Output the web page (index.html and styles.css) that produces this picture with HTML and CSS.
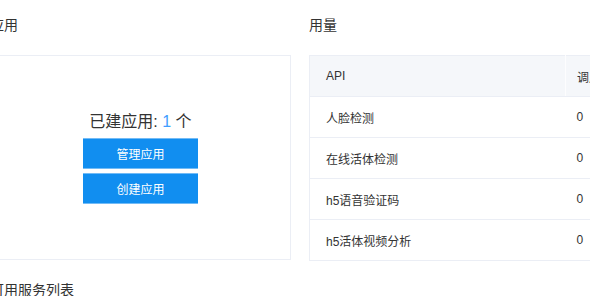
FILE: index.html
```html
<!DOCTYPE html>
<html>
<head>
  <title>控制台</title>
  <link rel="stylesheet" href="styles.css">
</head>
<body>
  <div class="overview">
    <div class="panel">
      <h3 class="panel-title">应用</h3>
      <div class="app-box">
        <p class="app-count">已建应用: <span class="num">1</span> 个</p>
        <button class="btn">管理应用</button>
        <button class="btn">创建应用</button>
      </div>
    </div>

    <div class="panel">
      <h3 class="panel-title">用量</h3>
      <table class="usage-table">
        <thead>
          <tr>
            <th class="col-api">API</th>
            <th class="col-calls">调用次数</th>
          </tr>
        </thead>
        <tbody>
          <tr><td>人脸检测</td><td>0</td></tr>
          <tr><td>在线活体检测</td><td>0</td></tr>
          <tr><td>h5语音验证码</td><td>0</td></tr>
          <tr><td>h5活体视频分析</td><td>0</td></tr>
        </tbody>
      </table>
    </div>
  </div>

  <h3 class="panel-title services-title">可用服务列表</h3>
</body>
</html>
```

FILE: styles.css
```css
body {
  font-family: "Liberation Sans", "Noto Sans CJK SC", sans-serif;
  margin: 0;
  background-color: #fff;
  color: #333;
  overflow: hidden;
}

.overview {
  display: grid;
  grid-template-columns: 301px 320px;
  gap: 18px;
  margin-left: -10px;
}

.panel-title {
  font-size: 14px;
  font-weight: normal;
  line-height: 20px;
  margin: 0;
  padding-top: 15px;
  margin-bottom: 20px;
  color: #333;
}

.app-box {
  height: 205px;
  border: 1px solid #ebeef5;
  box-sizing: border-box;
  display: flex;
  flex-direction: column;
  align-items: center;
  justify-content: center;
}

.app-count {
  font-size: 16px;
  line-height: 20px;
  margin: 0 0 6px 0;
  color: #333;
}

.app-count .num {
  color: #409eff;
}

.btn {
  width: 115px;
  height: 31px;
  margin-bottom: 4px;
  background-color: #118ef0;
  color: #fff;
  border: none;
  border-top: 1px solid #72bbf6;
  border-bottom: 1px solid #72bbf6;
  font-family: inherit;
  font-size: 12px;
  cursor: pointer;
}

.btn:last-child {
  margin-bottom: 0;
}

.usage-table {
  width: 320px;
  table-layout: fixed;
  border-collapse: collapse;
  font-size: 12px;
  color: #333;
  border: 1px solid #ebeef5;
}

.usage-table th,
.usage-table td {
  height: 40px;
  padding: 0 0 0 16px;
  text-align: left;
  font-weight: normal;
  border-bottom: 1px solid #ebeef5;
}

.usage-table thead tr {
  background-color: #f5f7fa;
}

.usage-table .col-api {
  width: 256px;
  box-sizing: border-box;
}

.usage-table .col-calls {
  border-left: 1px solid #fdfdfe;
  padding-left: 11px;
  white-space: nowrap;
}

.usage-table td:last-child {
  padding-left: 11px;
}

.services-title {
  margin-left: -10px;
  padding-top: 19px;
}
```
